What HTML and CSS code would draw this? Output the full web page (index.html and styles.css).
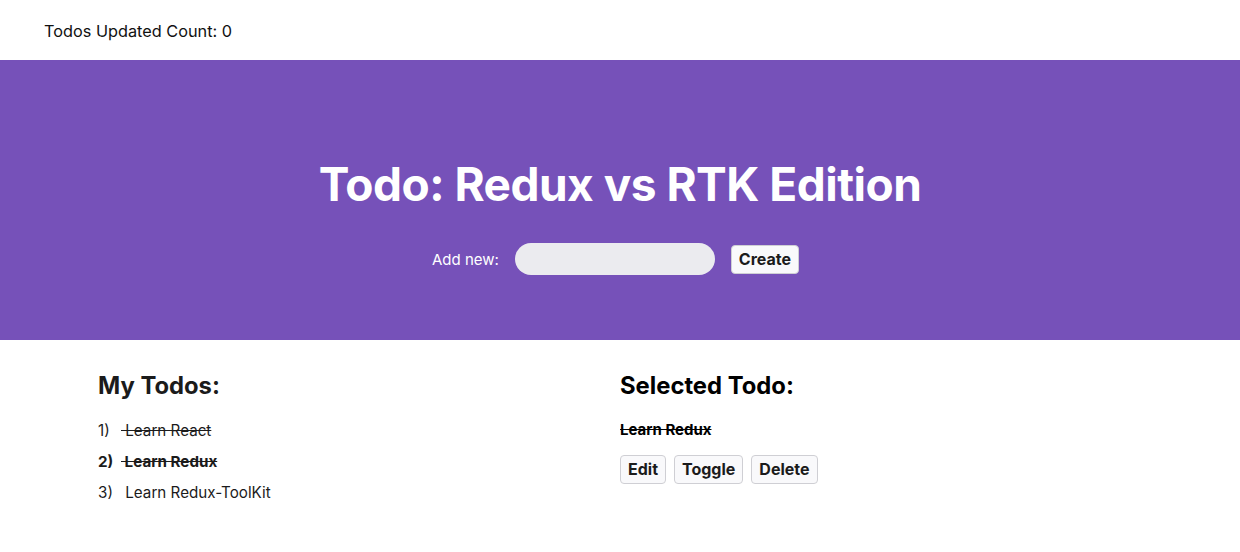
FILE: index.html
```html
<!DOCTYPE html>
<html>
<head>
<meta charset="utf-8">
<link rel="stylesheet" href="styles.css">
</head>
<body>
<div class="counter">Todos Updated Count: 0</div>
<header class="hero">
  <h1 class="title">Todo: Redux vs RTK Edition</h1>
  <form class="add-form">
    <label class="add-label">Add new:</label>
    <input class="add-input" type="text">
    <button class="btn" type="button">Create</button>
  </form>
</header>
<main class="content">
  <section class="col">
    <h2 class="heading">My Todos:</h2>
    <ol class="todo-list">
      <li class="todo"><span class="num">1)</span><span class="done"> Learn React</span></li>
      <li class="todo selected"><span class="num">2)</span><span class="done"> Learn Redux</span></li>
      <li class="todo"><span class="num">3)</span><span class="txt"> Learn Redux-ToolKit</span></li>
    </ol>
  </section>
  <section class="col">
    <h2 class="heading sel-heading">Selected Todo:</h2>
    <div class="sel-text">Learn Redux</div>
    <div class="actions">
      <button class="btn" type="button">Edit</button>
      <button class="btn" type="button">Toggle</button>
      <button class="btn" type="button">Delete</button>
    </div>
  </section>
</main>
</body>
</html>
```
FILE: styles.css
```css
* { box-sizing: border-box; }
body {
  margin: 0;
  font-family: Inter, "Noto Sans", sans-serif;
  color: #1b1b1b;
  background: #fff;
}
.counter {
  height: 60px;
  padding-left: 44px;
  display: flex;
  align-items: center;
  font-size: 16.3px;
  color: #111;
  padding-top: 2px;
}
.hero {
  background: #7651b9;
  height: 280px;
  display: flex;
  flex-direction: column;
  align-items: center;
  padding-top: 97px;
}
.title {
  margin: 0 0 31px;
  color: #fff;
  font-size: 46px;
  font-weight: 700;
  letter-spacing: -0.5px;
  line-height: 55px;
}
.add-form {
  display: flex;
  align-items: center;
  margin-right: 9px;
}
.add-label {
  color: #fff;
  font-size: 15px;
  margin-right: 16px;
}
.add-input {
  width: 200px;
  height: 32px;
  border: none;
  border-radius: 16px;
  background: #ebebef;
  margin-right: 16px;
  outline: none;
}
.btn {
  font-family: Inter, "Noto Sans", sans-serif;
  font-weight: 700;
  font-size: 16px;
  color: #1b1b1b;
  background: #f9f9fb;
  border: 1px solid #cfcfd4;
  border-radius: 4px;
  padding: 3px 7px;
  line-height: 21px;
}
.content {
  display: flex;
  padding-left: 98px;
}
.col { width: 522px; }
.heading {
  margin: 31px 0 0;
  font-size: 23.8px;
  font-weight: 700;
  line-height: 30px;
}
.sel-heading { color: #000; }
.todo-list {
  list-style: none;
  margin: 14px 0 0;
  padding: 0;
}
.todo {
  font-size: 15.2px;
  line-height: 31px;
  display: flex;
}
.todo .num { width: 23px; }
.done, .txt { white-space: pre; }
.done { text-decoration: line-through; }
.selected { font-weight: 700; }
.sel-text {
  margin-top: 19px;
  font-size: 15px;
  font-weight: 700;
  text-decoration: line-through;
  color: #000;
  line-height: 20px;
}
.actions {
  display: flex;
  gap: 8px;
  margin-top: 15px;
}
```
